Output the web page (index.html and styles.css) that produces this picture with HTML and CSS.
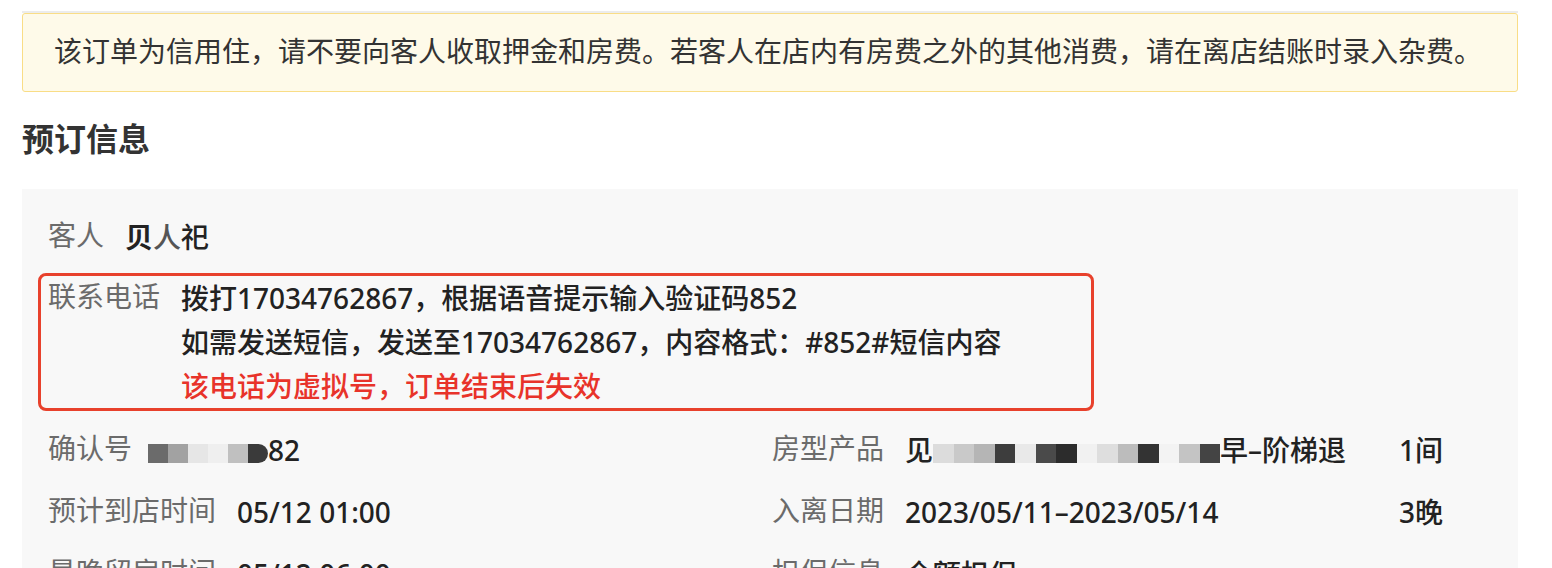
FILE: index.html
```html
<!DOCTYPE html>
<html lang="zh-CN">
<head>
    <meta charset="UTF-8">
    <title>订单详情</title>
    <link rel="stylesheet" href="styles.css">
</head>
<body>
    <div class="page">
        <div class="top-strip"></div>
        <div class="notice">该订单为信用住，请不要向客人收取押金和房费。若客人在店内有房费之外的其他消费，请在离店结账时录入杂费。</div>

        <h2>预订信息</h2>

        <div class="panel">
            <div class="row">
                <span class="label">客人</span>
                <span class="value name"><b>贝</b><span class="faded">人</span>祀</span>
            </div>

            <div class="row phone-box">
                <span class="label">联系电话</span>
                <div class="value lines">
                    <div>拨打17034762867，根据语音提示输入验证码852</div>
                    <div>如需发送短信，发送至17034762867，内容格式：#852#短信内容</div>
                    <div class="warn">该电话为虚拟号，订单结束后失效</div>
                </div>
            </div>

            <div class="grid">
                <div class="row">
                    <span class="label">确认号</span>
                    <span class="value confirm"><i class="blk c1"></i><i class="blk c2"></i><i class="blk c3"></i><i class="blk c4"></i><i class="blk c5"></i><i class="blk c6 round"></i>82</span>
                </div>
                <div class="row">
                    <span class="label">房型产品</span>
                    <span class="value grow">见<span class="mosaic"><i class="blk m1"></i><i class="blk m2"></i><i class="blk m3"></i><i class="blk m4"></i><i class="blk m5"></i><i class="blk m6"></i><i class="blk m7"></i><i class="blk m8"></i><i class="blk m9"></i><i class="blk m10"></i><i class="blk m11"></i><i class="blk m12"></i><i class="blk m13"></i><i class="blk m14"></i></span>早–阶梯退</span>
                    <span class="value count">1间</span>
                </div>

                <div class="row">
                    <span class="label">预计到店时间</span>
                    <span class="value">05/12 01:00</span>
                </div>
                <div class="row">
                    <span class="label">入离日期</span>
                    <span class="value grow">2023/05/11–2023/05/14</span>
                    <span class="value count">3晚</span>
                </div>

                <div class="row">
                    <span class="label">最晚留房时间</span>
                    <span class="value">05/12 06:00</span>
                </div>
                <div class="row">
                    <span class="label">担保信息</span>
                    <span class="value grow">全额担保</span>
                </div>
            </div>
        </div>
    </div>
</body>
</html>
```

FILE: styles.css
```css
body {
    margin: 0;
    padding-top: 11px;
    background: #fff;
    font-family: "Liberation Sans", "Noto Sans CJK SC", sans-serif;
    color: #222;
}

.page {
    width: 1496px;
    margin-left: 22px;
}

.top-strip {
    height: 2px;
    background: #ececec;
}

.notice {
    background: #fefae9;
    border: 1px solid #f9dd86;
    border-radius: 3px;
    padding: 18px 31px;
    font-size: 28px;
    line-height: 41px;
    color: #333;
    white-space: nowrap;
}

h2 {
    margin: 26px 0 27px;
    font-size: 32px;
    line-height: 44px;
    font-weight: bold;
    color: #333;
}

.panel {
    background: #f8f8f8;
    padding: 26px 22px 0 26px;
    display: flex;
    flex-direction: column;
    gap: 18px;
    height: 400px;
}

.row {
    display: flex;
    align-items: flex-start;
    font-size: 28px;
    line-height: 44px;
}

.label {
    color: #6b6b6b;
    margin-right: 21px;
    white-space: nowrap;
}

.value {
    font-family: "Noto Sans", "Noto Sans CJK SC", sans-serif;
    color: #222;
    font-weight: 500;
    white-space: nowrap;
}

.name .faded {
    color: #555;
}

.phone-box {
    border: 3px solid #e8412c;
    border-radius: 8px;
    width: 1036px;
    margin: -4px 0 -1px -10px;
    padding: 0 7px;
}

.warn {
    color: #e8332a;
}

.grid {
    display: grid;
    grid-template-columns: 1fr 1fr;
    row-gap: 18px;
}

.grow {
    flex: 1;
}

.count {
    margin-right: 53px;
    text-align: right;
}

.blk {
    display: inline-block;
    width: 20px;
    height: 19px;
    vertical-align: -2px;
}

.round {
    border-radius: 0 10px 10px 0;
}

.confirm .blk:first-child {
    margin-left: -5px;
}

.c1 { background: #6b6b6b; }
.c2 { background: #a2a2a2; }
.c3 { background: #e6e6e6; }
.c4 { background: #efefef; }
.c5 { background: #c0c0c0; }
.c6 { background: #3a3a3a; }

.mosaic .blk {
    width: 20.5px;
}

.m1 { background: #dcdcdc; }
.m2 { background: #c9c9c9; }
.m3 { background: #b5b5b5; }
.m4 { background: #3d3d3d; }
.m5 { background: #e9e9e9; }
.m6 { background: #4a4a4a; }
.m7 { background: #2c2c2c; }
.m8 { background: #f1f1f1; }
.m9 { background: #dedede; }
.m10 { background: #bcbcbc; }
.m11 { background: #333; }
.m12 { background: #f3f3f3; }
.m13 { background: #c4c4c4; }
.m14 { background: #444; }
```
